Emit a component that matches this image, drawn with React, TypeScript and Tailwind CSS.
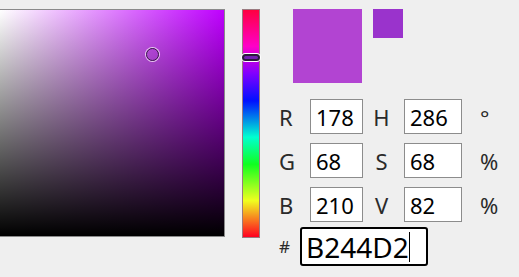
import React from "react"

const rows = [
    { a: "R", av: "178", b: "H", bv: "286", unit: "°" },
    { a: "G", av: "68", b: "S", bv: "68", unit: "%" },
    { a: "B", av: "210", b: "V", bv: "82", unit: "%" },
]

const font = { fontFamily: '"Noto Sans", "Open Sans", sans-serif' }

export default function App() {
    return (
        <div className="w-[519px] h-[277px] bg-[#efefef] overflow-hidden" style={font}>
            <div className="flex pt-[9px]">
                {/* saturation / value square */}
                <div className="relative w-[225px] h-[228px] border border-[#8a8a8a] border-l-0 bg-[linear-gradient(to_top,#000,transparent),linear-gradient(to_right,#fff,#bf00ff)]">
                    <div className="absolute left-[146px] top-[38px] w-[13px] h-[13px] rounded-full border-[1.5px] border-[#3a1a4a] ring-1 ring-[#e8c8f0]" />
                </div>

                {/* hue bar */}
                <div className="relative ml-[17px] w-[18px] h-[229px] border border-[#9a7a80] bg-[linear-gradient(to_bottom,#ff0040,#ff00c8_16%,#8000ff_28%,#0010ff_40%,#00ffd0_56%,#10ff20_68%,#f0ff20_84%,#ff0020_100%)]">
                    <div className="absolute -left-[1px] top-[44px] w-[18px] h-[7px] rounded-full border-2 border-[#2a1a3a] ring-1 ring-white bg-[#7020b0]" />
                </div>

                {/* right column */}
                <div className="ml-[19px] flex flex-col">
                    <div className="flex items-start ml-[14px]">
                        <div className="w-[69px] h-[74px] bg-[#B244D2]" />
                        <div className="ml-[11px] w-[30px] h-[29px] bg-[#9a33cc]" />
                    </div>

                    <div className="mt-[16px] flex flex-col gap-[9px]">
                        {rows.map((r) => (
                            <div key={r.a} className="flex items-center h-[35px] text-[22px] text-[#2a2a2a]">
                                <span className="w-[31px] leading-none">{r.a}</span>
                                <div className="w-[53px] h-[35px] border border-[#8c8c8c] bg-white flex items-center pl-[5px] leading-none text-black">
                                    {r.av}
                                </div>
                                <span className="w-[41px] text-center leading-none pr-[4px]">{r.b}</span>
                                <div className="w-[58px] h-[35px] border border-[#8c8c8c] bg-white flex items-center pl-[5px] leading-none text-black">
                                    {r.bv}
                                </div>
                                <span className="ml-[18px] leading-none">{r.unit}</span>
                            </div>
                        ))}
                    </div>

                    <div className="mt-[5px] flex items-center h-[39px]">
                        <span className="w-[21px] text-[17px] leading-none text-[#2a2a2a]">#</span>
                        <div className="w-[128px] h-[39px] border-2 border-black rounded-[3px] bg-white flex items-center pl-[4px] text-[28px] leading-none text-black">
                            <span>B244D2</span>
                            <span className="w-[1.5px] h-[30px] bg-black" />
                        </div>
                    </div>
                </div>
            </div>
        </div>
    )
}
